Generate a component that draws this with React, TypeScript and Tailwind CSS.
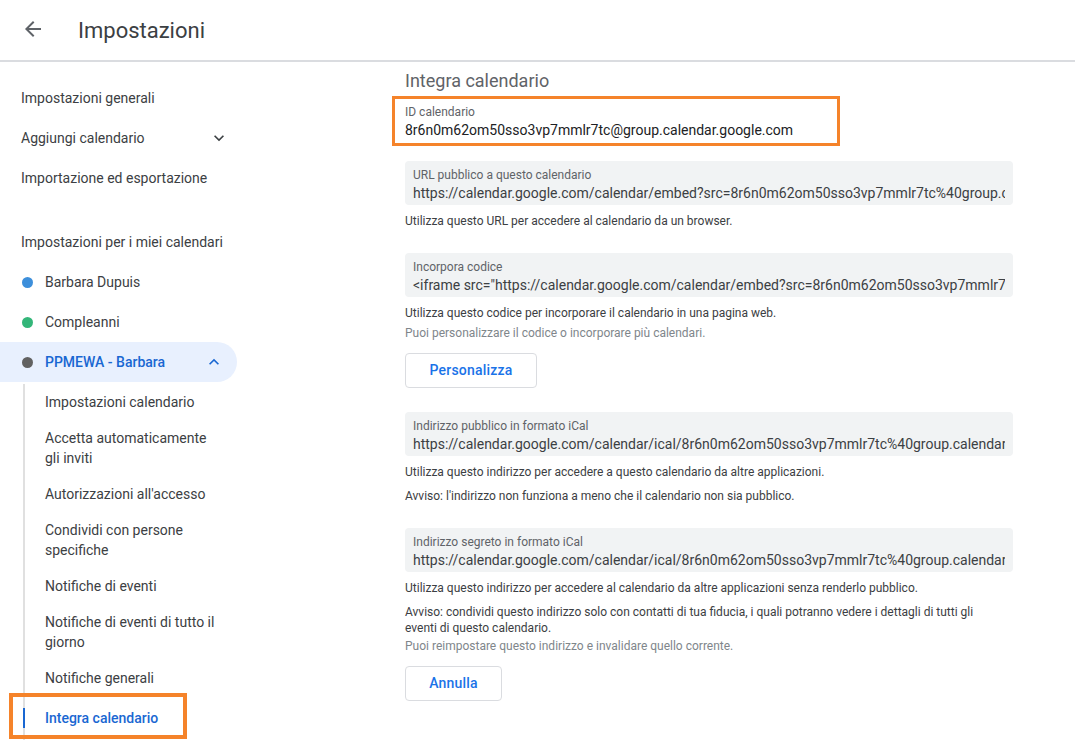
import React from 'react';

const ArrowBack = () => (
  <svg width="24" height="24" viewBox="0 0 24 24" fill="#5f6368">
    <path d="M20 11H7.83l5.59-5.59L12 4l-8 8 8 8 1.41-1.41L7.83 13H20v-2z" />
  </svg>
);

const ChevronDown = ({ color = '#3c4043' }: { color?: string }) => (
  <svg width="20" height="20" viewBox="0 0 24 24" fill={color}>
    <path d="M16.59 8.59L12 13.17 7.41 8.59 6 10l6 6 6-6z" />
  </svg>
);

const ChevronUp = ({ color = '#1967d2' }: { color?: string }) => (
  <svg width="20" height="20" viewBox="0 0 24 24" fill={color}>
    <path d="M12 8l-6 6 1.41 1.41L12 10.83l4.59 4.58L18 14z" />
  </svg>
);

const subItems = [
  'Impostazioni calendario',
  'Accetta automaticamente gli inviti',
  "Autorizzazioni all'accesso",
  'Condividi con persone specifiche',
  'Notifiche di eventi',
  'Notifiche di eventi di tutto il giorno',
  'Notifiche generali',
];

const calendars = [
  { name: 'Barbara Dupuis', color: 'bg-[#3d8fdb]' },
  { name: 'Compleanni', color: 'bg-[#33b679]' },
];

const CopyField: React.FC<{ label: string; value: string }> = ({ label, value }) => (
  <div className="bg-[#f1f3f4] rounded-[4px] px-2 pt-[6px] pb-[2px] overflow-hidden">
    <div className="text-[12px] leading-4 text-[#5f6368]">{label}</div>
    <div className="text-[14px] leading-5 text-[#3c4043] whitespace-nowrap overflow-hidden">{value}</div>
  </div>
);

const Help: React.FC<{ children: React.ReactNode; muted?: boolean; className?: string }> = ({ children, muted, className }) => (
  <p className={`text-[12px] leading-4 ${muted ? 'text-[#80868b]' : 'text-[#3c4043]'} ${className ?? ''}`}>{children}</p>
);

const OutlineButton: React.FC<{ children: React.ReactNode; className?: string }> = ({ children, className }) => (
  <button className={`h-[35px] border border-[#dadce0] rounded-[4px] text-[14px] font-medium text-[#1a73e8] tracking-[0.2px] bg-white ${className ?? ''}`}>
    {children}
  </button>
);

const calId = '8r6n0m62om50sso3vp7mmlr7tc';

export default function App() {
  return (
    <div className="w-[1075px] h-[740px] overflow-hidden bg-white text-[#3c4043]" style={{ fontFamily: 'Roboto, "Liberation Sans", sans-serif' }}>
      {/* header */}
      <header className="h-[62px] border-b-2 border-[#dadce0] flex items-center">
        <div className="ml-[21px] mt-[-2px]">
          <ArrowBack />
        </div>
        <h1 className="ml-[33px] text-[22px] text-[#3c4043] mt-[1px]">Impostazioni</h1>
      </header>

      <div className="flex">
        {/* sidebar */}
        <nav className="w-[256px] shrink-0 pt-[16px] text-[14px]">
          <div className="h-10 flex items-center pl-[21px]">Impostazioni generali</div>
          <div className="h-10 flex items-center pl-[21px] pr-[27px] justify-between">
            <span>Aggiungi calendario</span>
            <ChevronDown />
          </div>
          <div className="h-10 flex items-center pl-[21px]">Importazione ed esportazione</div>

          <div className="mt-6 h-10 flex items-center pl-[21px]">Impostazioni per i miei calendari</div>
          {calendars.map(c => (
            <div key={c.name} className="h-10 flex items-center pl-[22px]">
              <span className={`w-[11px] h-[11px] rounded-full ${c.color}`} />
              <span className="ml-[12px]">{c.name}</span>
            </div>
          ))}
          <div className="h-10 w-[237px] flex items-center pl-[22px] pr-[13px] bg-[#e8f0fe] rounded-r-full">
            <span className="w-[11px] h-[11px] rounded-full bg-[#616161]" />
            <span className="ml-[12px] font-medium text-[#1967d2] flex-1">PPMEWA - Barbara</span>
            <ChevronUp />
          </div>

          <div className="mt-[2px] ml-[23px] border-l-2 border-[#e0e0e0]">
            {subItems.map(s => (
              <div key={s} className="py-2 pl-[20px] w-[194px] leading-5">{s}</div>
            ))}
            <div className="relative -ml-[2px]">
              <div className="absolute left-[-14px] top-[-3px] w-[178px] h-[46px] border-4 border-[#f5832a]" />
              <div className="py-3">
                <div className="border-l-2 border-[#1967d2] pl-[20px] leading-5 font-medium text-[#1967d2]">Integra calendario</div>
              </div>
            </div>
          </div>
        </nav>

        {/* main */}
        <main className="ml-[149px] w-[608px] pt-[7px]">
          <h2 className="text-[18px] leading-6 text-[#5f6368]">Integra calendario</h2>

          <div className="mt-[3px] -ml-[13px] w-[448px] h-[50px] border-[3px] border-[#f5832a] pl-[10px] pt-[5px]">
            <div className="text-[12px] leading-4 text-[#5f6368]">ID calendario</div>
            <div className="text-[14px] leading-5 text-[#202124]">{calId}@group.calendar.google.com</div>
          </div>

          <div className="mt-[15px]">
            <CopyField label="URL pubblico a questo calendario" value={`https://calendar.google.com/calendar/embed?src=${calId}%40group.calendar.google.com&ctz=Europe%2FRome`} />
            <Help className="mt-2">Utilizza questo URL per accedere al calendario da un browser.</Help>
          </div>

          <div className="mt-6">
            <CopyField label="Incorpora codice" value={`<iframe src="https://calendar.google.com/calendar/embed?src=${calId}%40group.calendar.google.com&ctz=Europe%2FRome" style="border: 0" width="800" height="600" frameborder="0" scrolling="no"></iframe>`} />
            <Help className="mt-2">Utilizza questo codice per incorporare il calendario in una pagina web.</Help>
            <Help muted className="mt-1">Puoi personalizzare il codice o incorporare più calendari.</Help>
            <OutlineButton className="mt-3 w-[132px]">Personalizza</OutlineButton>
          </div>

          <div className="mt-6">
            <CopyField label="Indirizzo pubblico in formato iCal" value={`https://calendar.google.com/calendar/ical/${calId}%40group.calendar.google.com/public/basic.ics`} />
            <Help className="mt-2">Utilizza questo indirizzo per accedere a questo calendario da altre applicazioni.</Help>
            <Help className="mt-2">Avviso: l'indirizzo non funziona a meno che il calendario non sia pubblico.</Help>
          </div>

          <div className="mt-6">
            <CopyField label="Indirizzo segreto in formato iCal" value={`https://calendar.google.com/calendar/ical/${calId}%40group.calendar.google.com/private-0000000000/basic.ics`} />
            <Help className="mt-2">Utilizza questo indirizzo per accedere al calendario da altre applicazioni senza renderlo pubblico.</Help>
            <Help className="mt-2 pr-[20px]">Avviso: condividi questo indirizzo solo con contatti di tua fiducia, i quali potranno vedere i dettagli di tutti gli eventi di questo calendario.</Help>
            <Help muted className="mt-[2px]">Puoi reimpostare questo indirizzo e invalidare quello corrente.</Help>
            <OutlineButton className="mt-3 w-[97px]">Annulla</OutlineButton>
          </div>
        </main>
      </div>
    </div>
  );
}
